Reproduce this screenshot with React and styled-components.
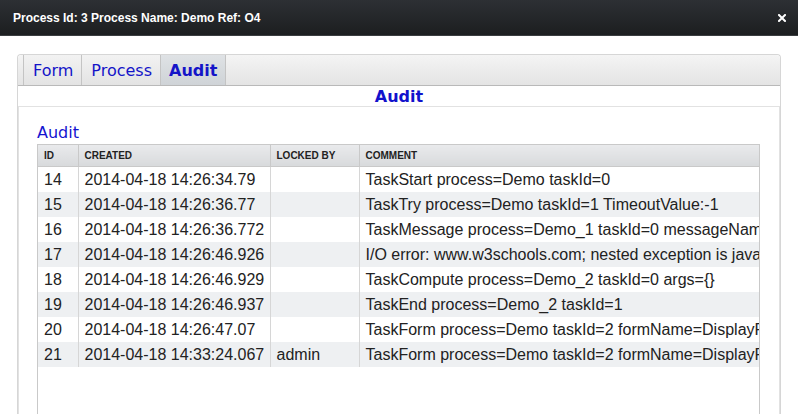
import React from "react";
import styled, { createGlobalStyle } from "styled-components";

const Global = createGlobalStyle`
  html, body { margin: 0; padding: 0; background: #fff; overflow: hidden; }
  body { font-family: "Liberation Sans", Arial, sans-serif; }
`;

const Page = styled.div`
  width: 798px;
  height: 414px;
  display: flex;
  flex-direction: column;
  overflow: hidden;
`;

const TitleBar = styled.div`
  height: 35px;
  flex: none;
  display: flex;
  align-items: center;
  justify-content: space-between;
  padding: 0 12px 0 13px;
  background: linear-gradient(#2d3034, #1c1e20);
  border-bottom: 1px solid #3a3d40;
  color: #fff;
  font: bold 12px "Liberation Sans", Arial, sans-serif;
`;

const CloseBtn = styled.span`
  display: flex;
  width: 8px;
  height: 8px;
`;

const Body = styled.div`
  flex: 1;
  padding: 18px 17px 0 17px;
  display: flex;
  flex-direction: column;
  min-height: 0;
`;

const TabPanel = styled.div`
  flex: 1;
  display: flex;
  flex-direction: column;
  border: 1px solid #d6d6d6;
  border-bottom: none;
  border-radius: 4px 4px 0 0;
  min-height: 0;
`;

const TabBar = styled.div`
  height: 30px;
  flex: none;
  display: flex;
  padding-left: 5px;
  background: linear-gradient(#f4f4f4, #e4e4e4);
  border-bottom: 1px solid #b9b9b9;
  border-radius: 4px 4px 0 0;
`;

const Tab = styled.div`
  display: flex;
  align-items: center;
  padding: 0 ${(p) => (p.$active ? "8px" : "8px")} 0 ${(p) => (p.$active ? "8px" : "9px")};
  border-left: ${(p) => (p.$first ? "1px solid #c4c4c4" : "none")};
  border-right: 1px solid #c4c4c4;
  background: ${(p) => (p.$active ? "linear-gradient(#dfe2e5, #cfd3d7)" : "linear-gradient(#f2f2f2, #e3e3e3)")};
  color: #1414c8;
  font: ${(p) => (p.$active ? "bold" : "normal")} 16px "DejaVu Sans", Verdana, sans-serif;
`;

const Heading = styled.div`
  height: 20px;
  flex: none;
  display: flex;
  align-items: center;
  justify-content: center;
  color: #1212cc;
  font: bold 16px "DejaVu Sans", Verdana, sans-serif;
`;

const Content = styled.div`
  flex: 1;
  border: 1px solid #e2e2e2;
  border-bottom: none;
  padding: 16px 19px 0 18px;
  display: flex;
  flex-direction: column;
  min-height: 0;
`;

const Label = styled.div`
  height: 21px;
  line-height: 24px;
  flex: none;
  color: #1414d0;
  font: 16px "DejaVu Sans", Verdana, sans-serif;
`;

const Grid = styled.div`
  flex: 1;
  border: 1px solid #c9c9c9;
  border-bottom: none;
  overflow: hidden;
  min-height: 300px;
`;

const Table = styled.table`
  width: 100%;
  table-layout: fixed;
  border-collapse: collapse;
`;

const Th = styled.th`
  height: 21px;
  padding: 0 6px;
  text-align: left;
  font: bold 10px "Liberation Sans", Arial, sans-serif;
  color: #222;
  background: linear-gradient(#e9eaec, #d8dadc);
  border-right: 1px solid #c9c9c9;
  border-bottom: 1px solid #c9c9c9;
  white-space: nowrap;
  overflow: hidden;
  &:last-child { border-right: none; }
`;

const Tr = styled.tr`
  background: ${(p) => (p.$alt ? "#eef0f2" : "#fff")};
`;

const Td = styled.td`
  height: 25px;
  padding: 0 6px;
  font: 16px "Liberation Sans", Arial, sans-serif;
  color: #222;
  border-right: 1px solid #d6d6d6;
  white-space: nowrap;
  overflow: hidden;
  &:last-child { border-right: none; }
`;

const rows = [
  ["14", "2014-04-18 14:26:34.79", "", "TaskStart process=Demo taskId=0"],
  ["15", "2014-04-18 14:26:36.77", "", "TaskTry process=Demo taskId=1 TimeoutValue:-1"],
  ["16", "2014-04-18 14:26:36.772", "", "TaskMessage process=Demo_1 taskId=0 messageName=Message"],
  ["17", "2014-04-18 14:26:46.926", "", "I/O error: www.w3schools.com; nested exception is java.net.UnknownHostException"],
  ["18", "2014-04-18 14:26:46.929", "", "TaskCompute process=Demo_2 taskId=0 args={}"],
  ["19", "2014-04-18 14:26:46.937", "", "TaskEnd process=Demo_2 taskId=1"],
  ["20", "2014-04-18 14:26:47.07", "", "TaskForm process=Demo taskId=2 formName=DisplayForm"],
  ["21", "2014-04-18 14:33:24.067", "admin", "TaskForm process=Demo taskId=2 formName=DisplayForm"],
];

export default function App() {
  return (
    <Page>
      <Global />
      <TitleBar>
        <span>Process Id: 3 Process Name: Demo Ref: O4</span>
        <CloseBtn>
          <svg width="8" height="8" viewBox="0 0 8 8">
            <path d="M1 1L7 7M7 1L1 7" stroke="#fff" strokeWidth="2" strokeLinecap="square" />
          </svg>
        </CloseBtn>
      </TitleBar>
      <Body>
        <TabPanel>
          <TabBar>
            <Tab $first>Form</Tab>
            <Tab>Process</Tab>
            <Tab $active>Audit</Tab>
          </TabBar>
          <Heading>Audit</Heading>
          <Content>
            <Label>Audit</Label>
            <Grid>
              <Table>
                <colgroup>
                  <col style={{ width: 40 }} />
                  <col style={{ width: 192 }} />
                  <col style={{ width: 89 }} />
                  <col />
                </colgroup>
                <thead>
                  <tr>
                    <Th>ID</Th>
                    <Th>CREATED</Th>
                    <Th>LOCKED BY</Th>
                    <Th>COMMENT</Th>
                  </tr>
                </thead>
                <tbody>
                  {rows.map((r, i) => (
                    <Tr key={r[0]} $alt={i % 2 === 1}>
                      {r.map((c, j) => (
                        <Td key={j}>{c}</Td>
                      ))}
                    </Tr>
                  ))}
                </tbody>
              </Table>
            </Grid>
          </Content>
        </TabPanel>
      </Body>
    </Page>
  );
}
